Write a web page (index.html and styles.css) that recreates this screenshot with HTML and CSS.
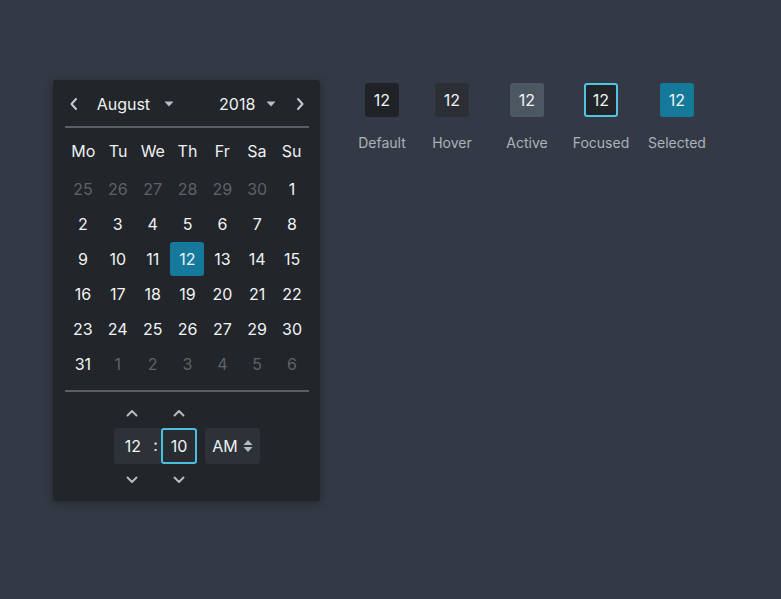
FILE: index.html
```html
<!DOCTYPE html>
<html lang="en">
<head>
<meta charset="utf-8">
<title>Datepicker</title>
<link rel="stylesheet" href="styles.css">
</head>
<body>
<div class="page">
  <div class="picker">
    <div class="head">
      <button class="nav prev" aria-label="Previous month">
        <svg width="10" height="14" viewBox="0 0 10 14"><path d="M7 2 L2.5 7 L7 12" fill="none" stroke="currentColor" stroke-width="2" stroke-linecap="round" stroke-linejoin="round"/></svg>
      </button>
      <div class="select month">August <svg class="caret" width="10" height="6" viewBox="0 0 10 6"><path d="M0.5 0.5 H9.5 L5 5.5 Z" fill="currentColor"/></svg></div>
      <div class="select year">2018 <svg class="caret" width="10" height="6" viewBox="0 0 10 6"><path d="M0.5 0.5 H9.5 L5 5.5 Z" fill="currentColor"/></svg></div>
      <button class="nav next" aria-label="Next month">
        <svg width="10" height="14" viewBox="0 0 10 14"><path d="M3 2 L7.5 7 L3 12" fill="none" stroke="currentColor" stroke-width="2" stroke-linecap="round" stroke-linejoin="round"/></svg>
      </button>
    </div>
    <div class="rule"></div>
    <div class="weekdays">
      <span>Mo</span><span>Tu</span><span>We</span><span>Th</span><span>Fr</span><span>Sa</span><span>Su</span>
    </div>
    <div class="days">
      <span class="muted">25</span><span class="muted">26</span><span class="muted">27</span><span class="muted">28</span><span class="muted">29</span><span class="muted">30</span><span>1</span>
      <span>2</span><span>3</span><span>4</span><span>5</span><span>6</span><span>7</span><span>8</span>
      <span>9</span><span>10</span><span>11</span><span class="sel">12</span><span>13</span><span>14</span><span>15</span>
      <span>16</span><span>17</span><span>18</span><span>19</span><span>20</span><span>21</span><span>22</span>
      <span>23</span><span>24</span><span>25</span><span>26</span><span>27</span><span>29</span><span>30</span>
      <span>31</span><span class="muted">1</span><span class="muted">2</span><span class="muted">3</span><span class="muted">4</span><span class="muted">5</span><span class="muted">6</span>
    </div>
    <div class="rule rule-bottom"></div>
    <div class="time">
      <div class="hm">
        <div class="unit">
          <button class="arrow"><svg width="12" height="8" viewBox="0 0 12 8"><path d="M1.5 6.5 L6 2 L10.5 6.5" fill="none" stroke="currentColor" stroke-width="2" stroke-linecap="round" stroke-linejoin="round"/></svg></button>
          <div class="field hour">12</div>
          <button class="arrow"><svg width="12" height="8" viewBox="0 0 12 8"><path d="M1.5 1.5 L6 6 L10.5 1.5" fill="none" stroke="currentColor" stroke-width="2" stroke-linecap="round" stroke-linejoin="round"/></svg></button>
        </div>
        <div class="colon">:</div>
        <div class="unit">
          <button class="arrow"><svg width="12" height="8" viewBox="0 0 12 8"><path d="M1.5 6.5 L6 2 L10.5 6.5" fill="none" stroke="currentColor" stroke-width="2" stroke-linecap="round" stroke-linejoin="round"/></svg></button>
          <div class="field minute">10</div>
          <button class="arrow"><svg width="12" height="8" viewBox="0 0 12 8"><path d="M1.5 1.5 L6 6 L10.5 1.5" fill="none" stroke="currentColor" stroke-width="2" stroke-linecap="round" stroke-linejoin="round"/></svg></button>
        </div>
      </div>
      <div class="ampm">AM <svg width="10" height="14" viewBox="0 0 10 14"><path d="M5 1 L9.5 6 H0.5 Z M5 13 L9.5 8 H0.5 Z" fill="currentColor"/></svg></div>
    </div>
  </div>

  <div class="states">
    <div class="state"><div class="box b-default">12</div><div class="label">Default</div></div>
    <div class="state"><div class="box b-hover">12</div><div class="label">Hover</div></div>
    <div class="state"><div class="box b-active">12</div><div class="label">Active</div></div>
    <div class="state"><div class="box b-focused">12</div><div class="label">Focused</div></div>
    <div class="state"><div class="box b-selected">12</div><div class="label">Selected</div></div>
  </div>
</div>
</body>
</html>
```

FILE: styles.css
```css
* { box-sizing: border-box; }
html, body { margin: 0; padding: 0; }
body {
  background: #343a45;
  font-family: Inter, "Noto Sans", sans-serif;
  color: #f1f3f5;
  width: 781px;
  height: 599px;
  overflow: hidden;
}
button {
  font: inherit;
  color: inherit;
  background: none;
  border: 0;
  padding: 0;
  margin: 0;
}
.page {
  display: flex;
  align-items: flex-start;
  padding: 80px 0 0 53px;
}
.picker {
  width: 267px;
  height: 421px;
  background: #222529;
  border-radius: 3px;
  box-shadow: 0 2px 10px rgba(0, 0, 0, 0.35);
  padding: 12px 11px 0 12px;
}
.head {
  height: 24px;
  display: flex;
  align-items: center;
  font-size: 16px;
  color: #eef0f2;
}
.nav {
  width: 20px;
  height: 24px;
  display: flex;
  align-items: center;
  justify-content: center;
  color: #c3c9cf;
}
.select {
  display: flex;
  align-items: center;
}
.month { margin-left: 14px; }
.month .caret { margin-left: 14px; }
.year { margin-left: 45px; }
.year .caret { margin-left: 11px; }
.caret { color: #b7bec5; }
.next { margin-left: 15px; }
.rule {
  height: 2px;
  background: #58616a;
  margin-top: 10px;
}
.weekdays {
  margin-top: 6px;
  height: 34px;
  display: grid;
  grid-template-columns: repeat(7, 1fr);
  align-items: center;
  text-align: center;
  font-size: 16px;
  color: #eef0f2;
  padding-left: 1px;
}
.days {
  margin-top: 3.5px;
  display: grid;
  grid-template-columns: repeat(7, 1fr);
  grid-auto-rows: 35px;
  font-size: 16px;
  color: #f1f3f5;
}
.days span {
  display: flex;
  align-items: center;
  justify-content: center;
  padding-left: 1px;
}
.days .muted { color: #5d636a; }
.days .sel {
  background: #14799a;
  border-radius: 3px;
  margin: 0 0 1px 0;
}
.rule-bottom { margin-top: 8.5px; }
.time {
  display: flex;
  justify-content: center;
  align-items: center;
  margin-top: 11px;
  gap: 8px;
}
.hm {
  display: flex;
  align-items: center;
}
.unit {
  display: flex;
  flex-direction: column;
  align-items: center;
  width: 36px;
}
.arrow {
  height: 20px;
  width: 36px;
  display: flex;
  align-items: center;
  justify-content: center;
  color: #b3bac1;
}
.field {
  width: 36px;
  height: 36px;
  display: flex;
  align-items: center;
  justify-content: center;
  font-size: 16px;
  background: #2d3239;
  margin: 5px 0 6px;
}
.hour { border-radius: 3px 0 0 3px; padding-left: 2px; }
.minute {
  border: 2px solid #4bbfdf;
  border-radius: 3px;
  background: #282c31;
}
.colon {
  width: 11px;
  height: 36px;
  background: #2d3239;
  display: flex;
  align-items: center;
  justify-content: center;
  font-size: 16px;
  color: #e9ecef;
  padding-bottom: 2px;
  margin-top: -1px;
}
.ampm {
  width: 55px;
  height: 36px;
  margin-top: -1px;
  background: #2d3239;
  border-radius: 3px;
  display: flex;
  align-items: center;
  justify-content: center;
  gap: 5px;
  font-size: 16px;
  color: #eef0f2;
}
.ampm svg { color: #b3bac1; }
.states {
  display: grid;
  grid-template-columns: 70px 70px 80px 68px 84px;
  margin-left: 27px;
  margin-top: 3px;
}
.state {
  display: flex;
  flex-direction: column;
  align-items: center;
}
.box {
  width: 34px;
  height: 34px;
  border-radius: 3px;
  display: flex;
  align-items: center;
  justify-content: center;
  font-size: 16px;
  color: #f1f3f5;
}
.b-default { background: #1f2226; }
.b-hover { background: #2b2f35; }
.b-active { background: #4c5762; }
.b-focused { background: #212529; border: 2px solid #52c3e3; }
.b-selected { background: #15799a; }
.label {
  margin-top: 17px;
  font-size: 14px;
  color: #aab2bb;
}
```
